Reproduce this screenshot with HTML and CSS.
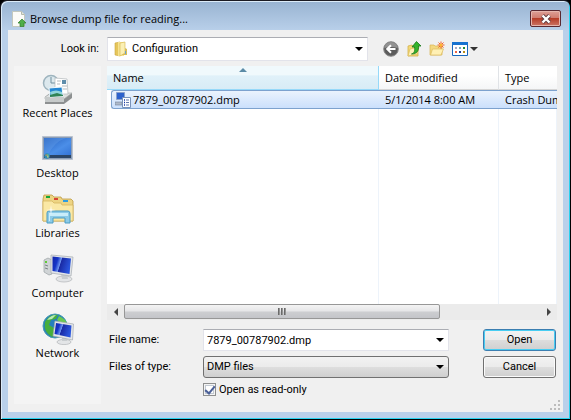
FILE: index.html
```html
<!DOCTYPE html>
<html lang="en">
<head>
    <meta charset="UTF-8">
    <meta name="viewport" content="width=device-width, initial-scale=1.0">
    <title>Browse dump file for reading...</title>
    <link rel="stylesheet" href="styles.css">
</head>
<body>
    <div class="dialog">
        <header class="titlebar">
            <svg class="title-icon" width="16" height="16" viewBox="0 0 16 16">
                <path d="M1.500 .5h9l3 3v12h-12z" fill="#fbfbf8" stroke="#c3c8bd"/>
                <path d="M10.500 .5v3h3" fill="#e4e6df" stroke="#b3b9ac"/>
                <path d="M11 8l4 4h-2v3.500h-4V12H7z" fill="#4fae48" stroke="#2f7d2d" stroke-width=".7"/>
            </svg>
            <h1>Browse dump file for reading...</h1>
            <button class="close" aria-label="Close">
                <svg width="12" height="10" viewBox="0 0 12 10">
                    <path d="M2.500 1.500l7 7M9.500 1.500l-7 7" stroke="#5b3a40" stroke-width="4"/>
                    <path d="M2.500 1.500l7 7M9.500 1.500l-7 7" stroke="#fff" stroke-width="2.400"/>
                </svg>
            </button>
        </header>

        <main class="client">
            <div class="lookin">
                <label for="look-in">Look in:</label>
                <div class="combo folder-combo">
                    <select id="look-in"><option>Configuration</option></select>
                    <svg class="folder" width="16" height="16" viewBox="0 0 16 16">
                        <path d="M2 2l5-1v14l-5-1z" fill="#e6c65b" stroke="#c9a53c" stroke-width=".6"/>
                        <path d="M5 1h6v14H5z" fill="#f7e391"/>
                        <path d="M7 2l5-1v11l-5 3z" fill="#fbf0b4" stroke="#d5b64e" stroke-width=".6"/>
                        <path d="M12 7l2 1v6H9l3-2z" fill="#d8bc55"/>
                        <path d="M12 10h1v3h-1z" fill="#6aa4ce"/>
                    </svg>
                    <svg class="arrow" width="8" height="4" viewBox="0 0 8 4"><path d="M0 0h8L4 4z"/></svg>
                </div>
                <div class="tools">
                    <button aria-label="Back">
                        <svg width="16" height="16" viewBox="0 0 16 16">
                            <circle cx="8" cy="8" r="7.300" fill="#5c5c5c" stroke="#8c8c8c"/>
                            <path d="M1.500 7a6.500 6 0 0 1 13 0q-6-2-13 0z" fill="#929292"/>
                            <path d="M12.500 8H4.500M8 4.200L4.200 8 8 11.800" fill="none" stroke="#fff" stroke-width="2"/>
                        </svg>
                    </button>
                    <button aria-label="Up one level">
                        <svg width="16" height="16" viewBox="0 0 16 16">
                            <path d="M2 5l4-1 1 1h5v10H2z" fill="#f3d977" stroke="#d3b14c" stroke-width=".8"/>
                            <path d="M2 15l2-7 9-2-2 7z" fill="#fdf1b8" stroke="#dcbb58" stroke-width=".7"/>
                            <path d="M5.500 13c3-1 3.500-3 3-7H6l4.500-5.500L15 5h-2.500c.5 5-2 8-7 8z" fill="#35b32c" stroke="#187719" stroke-width=".8"/>
                        </svg>
                    </button>
                    <button aria-label="Create new folder">
                        <svg width="16" height="16" viewBox="0 0 16 16">
                            <path d="M1 4h4l1 1h7v9H1z" fill="#f3d880" stroke="#d8b655" stroke-width=".7"/>
                            <path d="M1.500 14l2-6h11l-2.500 6z" fill="#fff0b4" stroke="#dcbc5e" stroke-width=".7"/>
                            <path d="M12 .5v7M8.500 4h7M9.500 1.500l5 5M14.500 1.500l-5 5" stroke="#f0602c"/>
                            <circle cx="12" cy="4" r="1.500" fill="#ffb62e"/>
                        </svg>
                    </button>
                    <button class="view" aria-label="View menu">
                        <svg width="16" height="14" viewBox="0 0 16 14">
                            <path d="M.5.5h15v13H.5z" fill="#fff" stroke="#1767bd"/>
                            <path d="M0 0h16v3H0z" fill="#1672d0"/>
                            <path d="M3 5h2v2H3z" fill="#a8a8c4"/><path d="M7 5h2v2H7z" fill="#77a7b4"/><path d="M11 5h2v2h-2z" fill="#238c34"/>
                            <path d="M3 9h2v2H3z" fill="#ee6544"/><path d="M7 9h2v2H7z" fill="#173994"/><path d="M11 9h2v2h-2z" fill="#ba8d18"/>
                        </svg>
                        <svg width="8" height="4" viewBox="0 0 8 4"><path d="M0 0h8L4 4z" fill="#333"/></svg>
                    </button>
                </div>
            </div>

            <div class="content">
                <nav class="places">
                    <button>
                        <svg width="32" height="32" viewBox="0 0 32 32">
                            <path d="M3 24l5-4h22v5l-8 6H3z" fill="#8d9091"/>
                            <path d="M3 24l6-4h21l-8 6H3z" fill="#dfe1e0" stroke="#a3a7a7" stroke-width=".6"/>
                            <path d="M3 24h19v5H3z" fill="#c6caca"/>
                            <circle cx="9" cy="10" r="7.500" fill="#dce8ed" stroke="#9eb4be" stroke-width="1.500"/>
                            <path d="M9 4v6h5" fill="none" stroke="#71909f"/>
                            <path d="M13 5l12 1 1 15H13z" fill="#fff" stroke="#b1b7ba" stroke-width=".7"/>
                            <path d="M15 8h4M15 11h3M20 13h5M21 16h4" stroke="#b3b9bd"/>
                            <path d="M20 7h4v4h-4z" fill="#5f8dab"/>
                            <path d="M7 15l13-1 1 9-13 1z" fill="#2286d2" stroke="#eef7fb"/>
                            <path d="M8 19q6-3 12 0v4H9z" fill="#8ed4db"/>
                            <path d="M8 22l7-2 6 2v1L8 24z" fill="#2f8355"/>
                        </svg>
                        Recent Places
                    </button>
                    <button>
                        <svg width="32" height="32" viewBox="0 0 32 32">
                            <defs>
                                <linearGradient id="desk" x1="0" y1="0" x2="1" y2="1">
                                    <stop offset="0" stop-color="#245fbd"/><stop offset=".6" stop-color="#4b8ee8"/><stop offset="1" stop-color="#3474d6"/>
                                </linearGradient>
                            </defs>
                            <path d="M.5 3.500h30v23H.5z" fill="#8c9db5" stroke="#b9c2cf"/>
                            <path d="M2 5h27v17H2z" fill="url(#desk)"/>
                            <path d="M2 5h22Q12 9 6 22H2z" fill="#6fa9f0" opacity=".3"/>
                            <path d="M2 22h27v3H2z" fill="#2b4566"/>
                            <circle cx="5" cy="23" r="2.800" fill="#2e8db4"/>
                            <path d="M3.500 21.500h1.300v1.300H3.500z" fill="#f28742"/><path d="M5.200 21.500h1.300v1.300H5.200z" fill="#a9dc55"/><path d="M5.200 23.200h1.300v1.300H5.200z" fill="#ffe16b"/>
                        </svg>
                        Desktop
                    </button>
                    <button>
                        <svg width="32" height="32" viewBox="0 0 32 32">
                            <path d="M1 6l1-4h8l2 2h7l1 2h9l2 2v20H1z" fill="#edd483" stroke="#bd9a43" stroke-width=".8"/>
                            <path d="M4 3h4v2H4z" fill="#16a638"/><path d="M12 5h4v2h-4z" fill="#d84334"/><path d="M21 7h5v2h-5z" fill="#2d9ce0"/>
                            <path d="M1 8h9l2 2h7l1 2h11v16H1z" fill="#fae8a5" stroke="#d5b65f" stroke-width=".8"/>
                            <path d="M5 30V20q0-2 2-2h19q2 0 2 3v9h-5v-5H11v5z" fill="#8dcbe7" stroke="#4b9cc3"/>
                            <path d="M7 20h19v3H8v5H7z" fill="#c9edfa"/>
                            <path d="M9 12l.6 4.400L14 17l-4.400.6L9 22l-.6-4.400L4 17l4.400-.6z" fill="#fff"/>
                        </svg>
                        Libraries
                    </button>
                    <button>
                        <svg width="32" height="32" viewBox="0 0 32 32">
                            <defs>
                                <linearGradient id="screen" x1="0" y1="0" x2="1" y2=".3">
                                    <stop offset="0" stop-color="#1525a5"/><stop offset=".3" stop-color="#1535c8"/><stop offset=".48" stop-color="#6f96f0"/><stop offset=".52" stop-color="#1a2aa4"/><stop offset="1" stop-color="#2a55dd"/>
                                </linearGradient>
                            </defs>
                            <path d="M2 7l4-2 4 2v14l-3 1-5-3z" fill="#d0d4d6" stroke="#9aa0a3" stroke-width=".7"/>
                            <path d="M3 12l3 1M3 15l3 1" stroke="#7d8488"/><path d="M3 8h2v2H3z" fill="#61cb36"/>
                            <ellipse cx="22" cy="26" rx="8" ry="3" fill="#e3e5e7" stroke="#b1b5b8" stroke-width=".7"/>
                            <path d="M19 21h6l1 5h-6z" fill="#c9cdd0"/>
                            <path d="M9 2l22 2-2 19-20-3z" fill="#e3e6e9" stroke="#a5abb0" stroke-width=".7"/>
                            <path d="M10.500 3.500L29 5.500l-1.500 15.500-17-3z" fill="url(#screen)"/>
                        </svg>
                        Computer
                    </button>
                    <button>
                        <svg width="32" height="32" viewBox="0 0 32 32">
                            <circle cx="13" cy="13" r="12" fill="#2580bd" stroke="#4c9bb1"/>
                            <path d="M3 9q5-9 13-7l-2 4-5 1-2 5 5 3 2 6-4 3q-9-5-7-15z" fill="#47ae3c"/>
                            <path d="M17 3q7 3 8 8l-6-1-4-3z" fill="#6bc951"/>
                            <path d="M5 7q4-5 9-5l-4 4z" fill="#b9e9b4"/>
                            <ellipse cx="22" cy="29" rx="7" ry="2.600" fill="#e3e5e7" stroke="#b1b5b8" stroke-width=".7"/>
                            <path d="M20 23h5v5h-5z" fill="#c9cdd0"/>
                            <path d="M13 8l18.500 3-1 16L11 23z" fill="#e3e6e9" stroke="#a5abb0" stroke-width=".7"/>
                            <path d="M14 10l15.500 2.500-1 12L12.500 21z" fill="url(#screen)"/>
                        </svg>
                        Network
                    </button>
                </nav>

                <div class="right">
                    <div class="list">
                        <table>
                            <thead>
                                <tr>
                                    <th class="col-name sorted">Name<svg width="8" height="4" viewBox="0 0 8 4"><path d="M4 0l4 4H0z" fill="#5b8ba6"/></svg></th>
                                    <th class="col-date">Date modified</th>
                                    <th>Type</th>
                                </tr>
                            </thead>
                            <tbody>
                                <tr class="selected">
                                    <td>
                                        <div class="file">
                                            <svg width="16" height="16" viewBox="0 0 16 16">
                                                <path d="M1.500.5h8v7h-8z" fill="#2d62cc" stroke="#8ba2cb"/>
                                                <path d="M0 10h7v3H0z" fill="#aeb9c8" stroke="#71829c" stroke-width=".6"/>
                                                <path d="M7.500 5.500h8v10h-8z" fill="#fff" stroke="#7893ba"/>
                                                <path d="M9 8h1M9 10.500h1M9 13h1" stroke="#1739a8" stroke-width="1.500"/>
                                                <path d="M11 8h3M11 10.500h3M11 13h3" stroke="#6078ad"/>
                                            </svg>
                                            7879_00787902.dmp
                                        </div>
                                    </td>
                                    <td>5/1/2014 8:00 AM</td>
                                    <td>Crash Dump File</td>
                                </tr>
                                <tr class="empty"><td></td><td></td><td></td></tr>
                            </tbody>
                        </table>
                    </div>
                    <div class="scrollbar">
                        <button aria-label="Scroll left"><svg width="4" height="8" viewBox="0 0 4 8"><path d="M4 0v8L0 4z" fill="#444"/></svg></button>
                        <div class="track"><div class="thumb"><span></span><span></span><span></span></div></div>
                        <button aria-label="Scroll right"><svg width="4" height="8" viewBox="0 0 4 8"><path d="M0 0v8l4-4z" fill="#444"/></svg></button>
                    </div>

                    <form class="form">
                        <label for="file-name">File name:</label>
                        <div class="combo">
                            <input type="text" id="file-name" value="7879_00787902.dmp">
                            <svg class="arrow" width="8" height="4" viewBox="0 0 8 4"><path d="M0 0h8L4 4z"/></svg>
                        </div>
                        <button type="button" class="btn default">Open</button>

                        <label for="file-type">Files of type:</label>
                        <div class="combo gray">
                            <select id="file-type"><option>DMP files</option></select>
                            <svg class="arrow" width="8" height="4" viewBox="0 0 8 4"><path d="M0 0h8L4 4z"/></svg>
                        </div>
                        <button type="button" class="btn">Cancel</button>

                        <label class="readonly"><input type="checkbox" checked>Open as read-only</label>
                    </form>
                </div>
            </div>
            <svg class="grip" width="10" height="10" viewBox="0 0 10 10">
                <path d="M8 0h2v2H8zM4 4h2v2H4zM8 4h2v2H8zM0 8h2v2H0zM4 8h2v2H4zM8 8h2v2H8z" fill="#bcbcbc"/>
            </svg>
        </main>
    </div>
</body>
</html>
```

FILE: styles.css
```css
* {
    box-sizing: border-box;
}

body {
    margin: 0;
    background: #000;
    color: #000;
    font-family: "Open Sans", "Noto Sans", sans-serif;
    font-size: 11px;
    line-height: 16px;
}

button, input, select {
    margin: 0;
    padding: 0;
    border: none;
    background: none;
    color: inherit;
    font: inherit;
}

svg {
    display: block;
    flex: none;
}

/* window frame */
.dialog {
    display: flex;
    flex-direction: column;
    min-height: 100vh;
    padding: 0 7px 7px;
    border: 1px solid #1b1b22;
    border-right-color: #000;
    border-bottom-color: #000;
    border-radius: 7px 7px 0 0;
    background: linear-gradient(#98b3d1, #b9d0ea 30px, #b9d0ea);
    box-shadow: inset 1px 1px 0 #dcebf8, inset -1px -1px 0 #28d2ef;
}

.titlebar {
    display: flex;
    align-items: center;
    height: 29px;
    padding: 6px 2px 0 3px;
}

.titlebar h1 {
    flex: 1;
    margin: 0 0 0 3px;
    font-size: 11px;
    font-weight: normal;
}

.close {
    display: flex;
    align-items: center;
    justify-content: center;
    width: 31px;
    height: 17px;
    border: 1px solid #5a2830;
    border-radius: 2px;
    background: linear-gradient(#dda097, #d17d70 45%, #b63d28 50%, #cb7566);
    box-shadow: inset 0 0 0 1px #e5b5ad;
}

.client {
    position: relative;
    display: flex;
    flex: 1;
    flex-direction: column;
    padding: 7px 6px 8px;
    background: #f0f0f0;
}

.lookin {
    display: flex;
    align-items: center;
    margin-bottom: 5px;
    font-family: Roboto, Arial, sans-serif;
}

.lookin label {
    width: 93px;
    padding-right: 8px;
    text-align: right;
}

/* text fields and drop-downs */
.combo {
    display: grid;
    grid-template-columns: 1fr;
    align-items: center;
    height: 22px;
    border: 1px solid #e2e3ea;
    border-top-color: #abadb3;
    background: #fff;
}

.combo > * {
    grid-area: 1 / 1;
}

.combo select, .combo input {
    width: 100%;
    height: 100%;
    padding: 0 18px 0 3px;
    appearance: none;
    outline: none;
}

.combo svg {
    pointer-events: none;
}

.arrow {
    justify-self: end;
    margin-right: 4px;
}

.folder-combo {
    flex: 1;
    height: 24px;
}

.folder-combo select {
    padding-left: 24px;
}

.folder {
    margin-left: 5px;
}

.combo.gray {
    border: 1px solid #707070;
    border-radius: 3px;
    background: linear-gradient(#f2f2f2, #ebebeb 48%, #dddddd 52%, #cfcfcf);
}

.tools {
    display: flex;
    gap: 7px;
    width: 189px;
    padding-left: 15px;
}

.view {
    display: flex;
    align-items: center;
    gap: 2px;
}

.content {
    display: flex;
    flex: 1;
    gap: 6px;
}

/* places bar */
.places {
    width: 87px;
    background: #f4f4f4;
}

.places button {
    display: flex;
    flex-direction: column;
    align-items: center;
    width: 100%;
    height: 60px;
    padding-top: 7px;
    white-space: nowrap;
}

.right {
    display: flex;
    flex: 1;
    flex-direction: column;
    min-width: 0;
}

/* file list */
.list {
    display: flex;
    flex: 1;
    overflow: hidden;
    background: #fff;
}

table {
    width: 100%;
    border-spacing: 0;
    table-layout: fixed;
}

th, td {
    overflow: hidden;
    padding: 0 0 0 6px;
    text-align: left;
    font-weight: normal;
    white-space: nowrap;
}

th {
    height: 24px;
    border-right: 1px solid #e0e3e7;
    border-bottom: 1px solid #d5d5d5;
    background: linear-gradient(#fff 40%, #f5f6f7);
}

.col-name {
    width: 272px;
}

.col-date {
    width: 120px;
}

.sorted {
    position: relative;
    border-color: #96d9f9;
    background: linear-gradient(#f0f9fc 40%, #e0f1f9 42%, #d8ecf6);
}

.sorted svg {
    position: absolute;
    top: 2px;
    left: 50%;
    margin-left: -4px;
}

th:last-child, td:last-child {
    border-right: none;
}

.selected td {
    height: 19px;
    border-top: 1px solid #7da2ce;
    border-bottom: 1px solid #7da2ce;
    background: linear-gradient(#ebf3fd, #cbe0fc);
}

.selected td:first-child {
    padding-left: 4px;
    border: none;
    background: none;
}

.file {
    display: flex;
    align-items: center;
    gap: 2px;
    height: 19px;
    padding-left: 3px;
    border: 1px solid #7da2ce;
    border-right: none;
    border-radius: 3px 0 0 3px;
    background: linear-gradient(#ebf3fd, #cbe0fc);
}

.empty td {
    border-right: 1px solid #edf3fa;
}

.scrollbar {
    display: flex;
    height: 16px;
    background: #ebebeb;
}

.scrollbar button {
    display: flex;
    align-items: center;
    justify-content: center;
    width: 17px;
}

.track {
    flex: 1;
}

.thumb {
    display: flex;
    align-items: center;
    justify-content: center;
    gap: 1px;
    width: 76%;
    height: 15px;
    border: 1px solid #979797;
    border-radius: 2px;
    background: linear-gradient(#f4f4f4, #e5e5e7 48%, #cdced1 52%, #c4c5c9);
}

.thumb span {
    width: 2px;
    height: 7px;
    background: linear-gradient(90deg, #555, #aaa);
}

/* bottom fields */
.form {
    display: grid;
    grid-template-columns: 94px 1fr 73px;
    align-items: center;
    row-gap: 5px;
    padding: 9px 1px 8px 2px;
    font-family: Roboto, Arial, sans-serif;
}

.btn {
    height: 22px;
    border: 1px solid #707070;
    border-radius: 3px;
    background: linear-gradient(#f2f2f2, #ebebeb 48%, #dddddd 52%, #cfcfcf);
    box-shadow: inset 0 0 0 1px #fbfbfb;
    text-align: center;
}

.form .combo {
    margin-right: 34px;
}

.btn.default {
    border-color: #3c7fb1;
    box-shadow: inset 0 0 0 1px #48cdf2;
}

.readonly {
    display: flex;
    grid-column: 2 / 4;
    align-items: center;
    gap: 3px;
    line-height: 13px;
}

.readonly input {
    display: grid;
    place-items: center;
    width: 13px;
    height: 13px;
    border: 1px solid #8e8f8f;
    background: #fff;
    box-shadow: inset 0 0 0 1px #f4f4f4, inset 0 0 0 2px #c3cad3;
    appearance: none;
}

.readonly input:checked::after {
    content: "";
    width: 4px;
    height: 8px;
    margin-bottom: 2px;
    border: solid #4a5f97;
    border-width: 0 2px 2px 0;
    transform: rotate(40deg);
}

.grip {
    position: absolute;
    right: 3px;
    bottom: 2px;
}
```
